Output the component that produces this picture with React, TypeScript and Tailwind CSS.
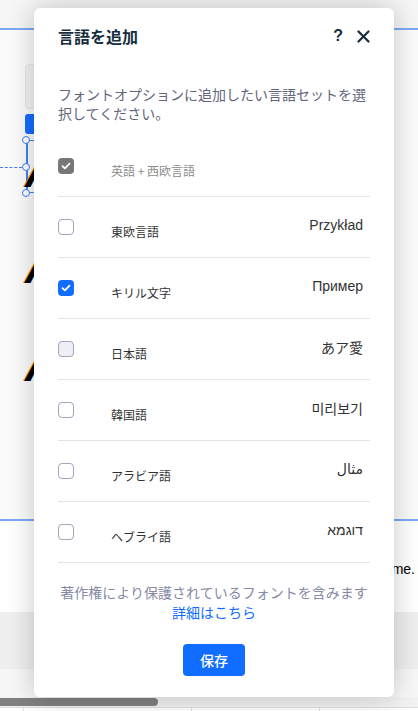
import { useState } from "react";

const jp = "font-['Noto_Sans_CJK_JP',sans-serif]";

interface LangRow {
  label: string;
  sample: string;
  sampleFont: string;
  state: "locked" | "on" | "off" | "hover";
}

const rows: LangRow[] = [
  { label: "英語 + 西欧言語", sample: "", sampleFont: "", state: "locked" },
  { label: "東欧言語", sample: "Przykład", sampleFont: "font-['Liberation_Sans',sans-serif]", state: "off" },
  { label: "キリル文字", sample: "Пример", sampleFont: "font-['Liberation_Sans',sans-serif]", state: "on" },
  { label: "日本語", sample: "あア愛", sampleFont: "font-['Noto_Sans_CJK_JP',sans-serif]", state: "hover" },
  { label: "韓国語", sample: "미리보기", sampleFont: "font-['Noto_Sans_CJK_KR',sans-serif]", state: "off" },
  { label: "アラビア語", sample: "مثال", sampleFont: "font-['DejaVu_Sans',sans-serif]", state: "off" },
  { label: "ヘブライ語", sample: "דוגמא", sampleFont: "font-['Liberation_Sans',sans-serif]", state: "off" },
];

// small white tick used inside filled checkboxes
const Tick = () => (
  <svg width="10" height="8" viewBox="0 0 10 8" fill="none">
    <path d="M1.5 4.2L3.9 6.4L8.5 1.6" stroke="white" strokeWidth="1.8" strokeLinecap="round" strokeLinejoin="round" />
  </svg>
);

const Checkbox = ({ state, onClick }: { state: LangRow["state"]; onClick: () => void }) => {
  if (state === "locked")
    return (
      <span className="mt-[22px] flex h-4 w-4 shrink-0 items-center justify-center rounded-[4px] bg-[#777777]">
        <Tick />
      </span>
    );
  if (state === "on")
    return (
      <button onClick={onClick} className="mt-[22px] flex h-4 w-4 shrink-0 items-center justify-center rounded-[4px] bg-[#116dff]">
        <Tick />
      </button>
    );
  return (
    <button
      onClick={onClick}
      className={`mt-[22px] h-4 w-4 shrink-0 rounded-[4px] border border-[#a3a5bd] ${
        state === "hover" ? "bg-[#eef0f6]" : "bg-white"
      }`}
    />
  );
};

export default function App() {
  const [items, setItems] = useState(rows);

  const toggle = (i: number) =>
    setItems((prev) =>
      prev.map((r, idx) => (idx === i ? { ...r, state: r.state === "on" ? "off" : "on" } : r))
    );

  return (
    <div className="relative h-[711px] w-[418px] overflow-hidden bg-white font-['Liberation_Sans',sans-serif]">
      {/* editor behind the dialog */}
      <div className="flex h-full flex-col">
        <div className="h-[28px] bg-[#f6f6f6]" />
        <div className="h-[2px] bg-[#7ba8f6]" />
        <div className="relative h-[489px] bg-[#fbfbfb]">
          <div className="absolute left-[25px] top-[34px] h-[45px] w-[20px] rounded-[4px] border border-[#e6e6e6] bg-[#f3f3f3]" />
          <div className="absolute left-[25px] top-[84px] h-[20px] w-[20px] rounded-[3px] bg-[#116dff]" />
          <div className="absolute left-0 top-[137px] w-[22px] border-t border-dashed border-[#3b82f6]" />
          <div className="absolute left-[26px] top-[110px] h-[53px] w-[12px] border-y border-l-2 border-[#3b82f6]" />
          <span className="absolute left-[22px] top-[106px] h-[8px] w-[8px] rounded-full border border-[#3b82f6] bg-white" />
          <span className="absolute left-[22px] top-[133px] h-[8px] w-[8px] rounded-full border border-[#3b82f6] bg-white" />
          <span className="absolute left-[22px] top-[159px] h-[8px] w-[8px] rounded-full border border-[#3b82f6] bg-white" />
          <span className="absolute left-[25px] top-[120px] text-[44px] font-bold italic leading-none text-black [text-shadow:-1px_0_#f2a23a]">A</span>
          <span className="absolute left-[25px] top-[216px] text-[44px] font-bold italic leading-none text-black [text-shadow:-1px_0_#f2a23a]">A</span>
          <span className="absolute left-[25px] top-[314px] text-[44px] font-bold italic leading-none text-black [text-shadow:-1px_0_#f2a23a]">A</span>
        </div>
        <div className="h-[2px] bg-[#7ba8f6]" />
        <div className="flex h-[91px] items-start justify-end bg-white pr-[3px] pt-[38px] text-[14px] text-black">
          me.
        </div>
        <div className="h-[57px] bg-[#efefef]" />
        <div className="h-[28px] bg-[#f7f7f7]" />
        <div className="h-[10px] bg-[#f2f2f2] py-[1px]">
          <div className="h-full w-[158px] rounded-r-full bg-[#808080]" />
        </div>
        <div className="flex flex-1 border-t border-[#dedede] bg-white">
          <div className="w-[24px] border-r border-[#e2e2e2]" />
          <div className="w-[168px] border-r border-[#e2e2e2]" />
          <div className="w-[128px] border-r border-[#e2e2e2]" />
        </div>
      </div>

      {/* dialog */}
      <div className={`absolute left-[34px] top-[8px] flex h-[689px] w-[360px] flex-col rounded-[6px] bg-white px-6 shadow-[0_0_28px_rgba(0,0,0,0.22)] ${jp}`}>
        <div className="flex h-[56px] shrink-0 items-center justify-between">
          <h2 className="text-[16px] font-bold leading-6 text-[#162d3d]">言語を追加</h2>
          <div className="flex items-center gap-[14px] pr-0">
            <span className="font-['Liberation_Sans',sans-serif] text-[16px] font-bold text-[#162d3d]">?</span>
            <svg width="13" height="13" viewBox="0 0 13 13">
              <path d="M1.5 1.5L11.5 11.5M11.5 1.5L1.5 11.5" stroke="#162d3d" strokeWidth="2.2" strokeLinecap="round" />
            </svg>
          </div>
        </div>

        <p className="pt-[21px] text-[14px] leading-[19px] text-[#62667a]">
          フォントオプションに追加したい言語セットを選択してください。
        </p>

        <div className="mt-[13px] flex flex-col">
          {items.map((r, i) => (
            <div key={r.label} className="flex h-[61px] items-start border-b border-[#dfe5eb]">
              <Checkbox state={r.state} onClick={() => toggle(i)} />
              <span
                className={`ml-[37px] mt-[27px] text-[12px] leading-4 ${
                  r.state === "locked" ? "text-[#8c8c8c]" : "text-[#333333]"
                }`}
              >
                {r.label}
              </span>
              {r.sample && (
                <span className={`ml-auto mr-[7px] mt-[18px] text-[14px] leading-5 text-[#333333] ${r.sampleFont}`}>
                  {r.sample}
                </span>
              )}
            </div>
          ))}
        </div>

        <div className="flex flex-col items-center pt-[19px]">
          <p className="text-[14px] leading-5 text-[#868aa5]">著作権により保護されているフォントを含みます</p>
          <a className="text-[14px] leading-[21px] text-[#116dff]">詳細はこちら</a>
          <button className="mt-[21px] h-[32px] w-[62px] rounded-[4px] bg-[#116dff] text-[14px] font-medium text-white">
            保存
          </button>
        </div>
      </div>
    </div>
  );
}
